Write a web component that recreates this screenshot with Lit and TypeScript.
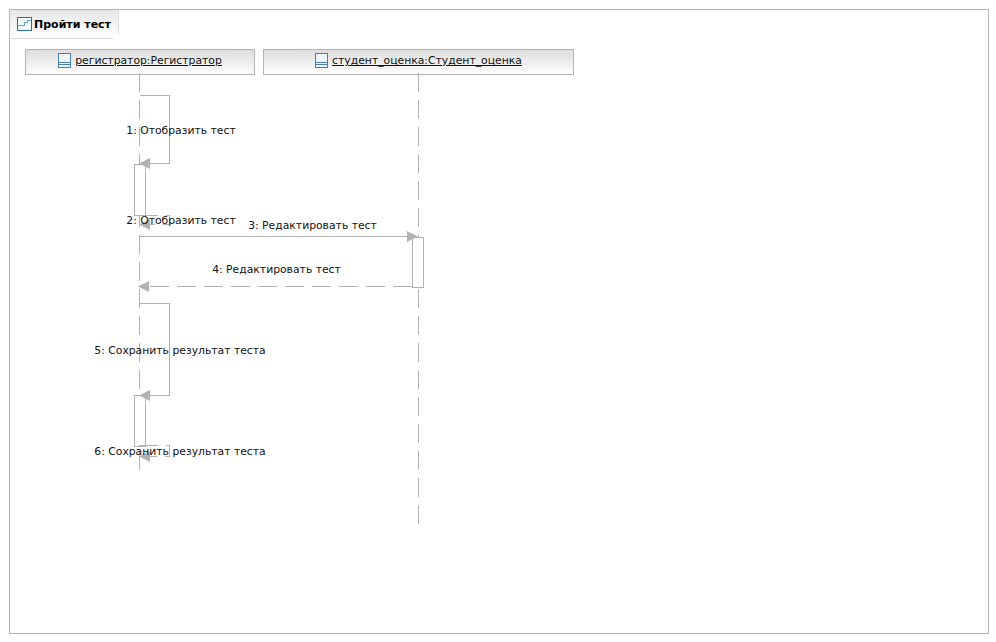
import { LitElement, html, css, svg } from "lit";
import { customElement } from "lit/decorators.js";

const GREY = "#b2b2b2";
const DASH = "19 8";

const nodes = [
  { x: 25, w: 230, name: "регистратор:Регистратор" },
  { x: 263, w: 311, name: "студент_оценка:Студент_оценка" },
];

const labels = [
  { cx: 181, y: 130, t: "1: Отобразить тест" },
  { cx: 181, y: 220, t: "2: Отобразить тест" },
  { cx: 312.5, y: 225, t: "3: Редактировать тест" },
  { cx: 276.5, y: 269, t: "4: Редактировать тест" },
  { cx: 180, y: 350, t: "5: Сохранить результат теста" },
  { cx: 180, y: 451, t: "6: Сохранить результат теста" },
];

const rects = [
  [134, 164, 11, 51],
  [412, 237, 11, 50],
  [134, 395, 11, 51],
];

const lines = [
  "M139.5 95.5H169.5V163.5H149",
  "M139.5 236.5H408",
  "M139.5 303.5H169.5V395.5H149",
];

const lifelines = ["M139.5 73V470", "M418.5 73V524"];

const dashed = [
  "M412 286.5H149",
  "M139 215.5H169.5V224.5H149",
  "M139 445.5H169.5V456.5H149",
];

const arrowsLeft = [
  [139, 163.5],
  [139, 224.5],
  [138, 286.5],
  [139, 395.5],
  [139, 456.5],
];

@customElement("app-root")
export class AppRoot extends LitElement {
  static styles = css`
    :host {
      display: block;
      width: 996px;
      height: 642px;
      padding: 9px 7px 8px 9px;
      box-sizing: border-box;
      background: #fff;
      font-family: "DejaVu Sans", Verdana, sans-serif;
      font-size: 10.8px;
      color: #111;
    }
    .frame {
      height: 100%;
      box-sizing: border-box;
      border: 1px solid #b4b4b4;
      display: flex;
      flex-direction: column;
      position: relative;
    }
    .tab {
      width: 109px;
      height: 29px;
      box-sizing: border-box;
      display: flex;
      align-items: center;
      gap: 2px;
      padding: 0 0 0 7px;
      font-size: 11px;
      font-weight: bold;
      color: #000;
      background: linear-gradient(to bottom, #e6e6e6, #ffffff);
      border-right: 1px solid #dcdcdc;
      border-bottom: 1px solid #dcdcdc;
      clip-path: polygon(0 0, 100% 0, 100% calc(100% - 6px), calc(100% - 6px) 100%, 0 100%);
      white-space: nowrap;
    }
    .tab svg {
      flex: none;
      display: block;
    }
    .node {
      position: absolute;
      top: 39px;
      height: 26px;
      box-sizing: border-box;
      border: 1px solid #b4b4b4;
      background: linear-gradient(to bottom, #dedede, #fdfdfd);
      display: flex;
      align-items: center;
      justify-content: center;
      gap: 4px;
      padding-bottom: 3px;
      white-space: nowrap;
    }
    .node span {
      text-decoration: underline;
    }
    .node svg {
      flex: none;
      display: block;
    }
    .diagram {
      position: absolute;
      left: -10px;
      top: -10px;
      width: 996px;
      height: 642px;
      pointer-events: none;
    }
    .label {
      position: absolute;
      transform: translate(-50%, -50%);
      white-space: nowrap;
    }
  `;

  private classIcon() {
    return html`<svg width="13" height="15" viewBox="0 0 13 15" fill="none" stroke="#4a80b8">
      <rect x="0.5" y="0.5" width="12" height="14" fill="#f0f5fb"></rect>
      <path d="M0.5 9.5H12.5M0.5 11.5H12.5"></path>
    </svg>`;
  }

  render() {
    return html`<div class="frame">
      <div class="tab">
        <svg width="15" height="14" viewBox="0 0 15 14" fill="none" shape-rendering="crispEdges">
          <rect x="0.5" y="0.5" width="14" height="13" fill="#f2f8fc" stroke="#2f6f9f"></rect>
          <path d="M1 8.5H7.5V5.5H10.5V3.5H14" stroke="#6fa3c8"></path>
        </svg>
        <span>Пройти тест</span>
      </div>
      ${nodes.map(
        (n) => html`<div class="node" style="left:${n.x - 10}px;width:${n.w}px">
          ${this.classIcon()}<span>${n.name}</span>
        </div>`
      )}
      <svg class="diagram" viewBox="0 0 996 642" fill="none" stroke=${GREY} shape-rendering="crispEdges">
        ${lifelines.map((d) => svg`<path d=${d} stroke-dasharray=${DASH}></path>`)}
        ${rects.map(
          ([x, y, w, h]) =>
            svg`<rect x=${x + 0.5} y=${y + 0.5} width=${w} height=${h} fill="#fff"></rect>`
        )}
        ${dashed.map((d) => svg`<path d=${d} stroke-dasharray=${DASH}></path>`)}
        ${lines.map((d) => svg`<path d=${d}></path>`)}
        <g fill=${GREY} stroke="none" shape-rendering="auto">
          ${arrowsLeft.map(
            ([x, y]) => svg`<path d="M${x} ${y}L${x + 11} ${y - 5.5}V${y + 5.5}Z"></path>`
          )}
          <path d="M418 236.5L407 231V242Z"></path>
        </g>
      </svg>
      ${labels.map(
        (l) => html`<div class="label" style="left:${l.cx - 10}px;top:${l.y - 10}px">${l.t}</div>`
      )}
    </div>`;
  }
}
